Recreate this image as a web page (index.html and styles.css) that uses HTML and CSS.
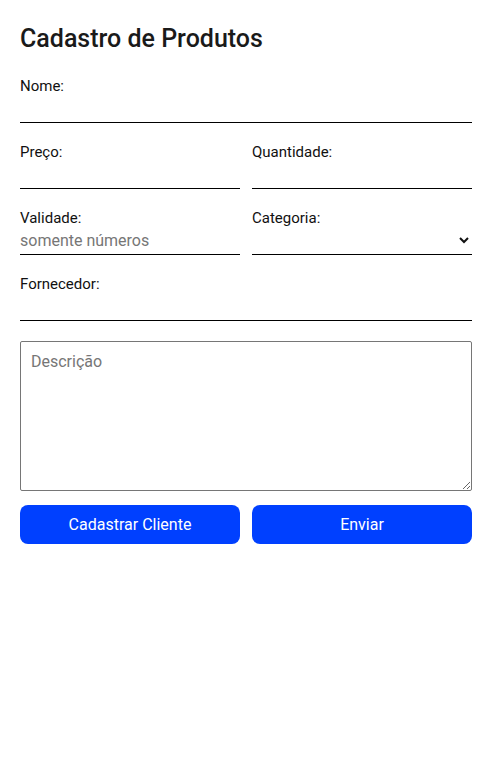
FILE: index.html
```html
<!DOCTYPE html>
<html lang="pt-BR">
<head>
<meta charset="utf-8">
<title>Cadastro de Produtos</title>
<link rel="stylesheet" href="styles.css">
</head>
<body>
<main class="page">
  <h1 class="title">Cadastro de Produtos</h1>
  <form class="form">
    <div class="field">
      <label class="label" for="nome">Nome:</label>
      <input class="input" id="nome" type="text">
    </div>
    <div class="row">
      <div class="field">
        <label class="label" for="preco">Preço:</label>
        <input class="input" id="preco" type="text">
      </div>
      <div class="field">
        <label class="label" for="qtd">Quantidade:</label>
        <input class="input" id="qtd" type="text">
      </div>
    </div>
    <div class="row">
      <div class="field">
        <label class="label" for="validade">Validade:</label>
        <input class="input" id="validade" type="text" placeholder="somente números">
      </div>
      <div class="field">
        <label class="label" for="categoria">Categoria:</label>
        <select class="input select" id="categoria">
          <option></option>
        </select>
      </div>
    </div>
    <div class="field">
      <label class="label" for="fornecedor">Fornecedor:</label>
      <input class="input" id="fornecedor" type="text">
    </div>
    <textarea class="textarea" placeholder="Descrição"></textarea>
    <div class="row buttons">
      <button class="btn" type="button">Cadastrar Cliente</button>
      <button class="btn" type="submit">Enviar</button>
    </div>
  </form>
</main>
</body>
</html>
```
FILE: styles.css
```css
* { box-sizing: border-box; }
html, body { margin: 0; background: #fff; }
body { font-family: Roboto, "Liberation Sans", sans-serif; color: #111; }
.page { padding: 24px 19px 20px 20px; }
.title {
  margin: 0;
  font-size: 25px;
  line-height: 30px;
  font-weight: 500;
  color: #1a1a1a;
}
.form {
  margin-top: 24px;
  display: flex;
  flex-direction: column;
  gap: 21px;
}
.row {
  display: grid;
  grid-template-columns: 1fr 1fr;
  gap: 12px;
}
.field { display: flex; flex-direction: column; }
.label {
  font-size: 15px;
  line-height: 16px;
  color: #111;
}
.input {
  height: 29px;
  padding: 0;
  border: none;
  border-bottom: 1px solid #000;
  border-radius: 0;
  background: transparent;
  font-family: Roboto, "Liberation Sans", sans-serif;
  font-size: 16px;
  color: #111;
  outline: none;
  width: 100%;
}
.input::placeholder { color: #767676; }
.select { padding-right: 0; }
.textarea {
  margin-top: -1px;
  height: 150px;
  width: 100%;
  border: 1px solid #767676;
  border-radius: 2px;
  padding: 10px;
  font-family: Roboto, "Liberation Sans", sans-serif;
  font-size: 16px;
  line-height: 19px;
  color: #111;
  resize: both;
}
.textarea::placeholder { color: #767676; }
.buttons { margin-top: -7px; }
.btn {
  height: 39px;
  border: none;
  border-radius: 8px;
  background: #0040ff;
  color: #fff;
  font-family: Roboto, "Liberation Sans", sans-serif;
  font-size: 16px;
  cursor: pointer;
}
```
